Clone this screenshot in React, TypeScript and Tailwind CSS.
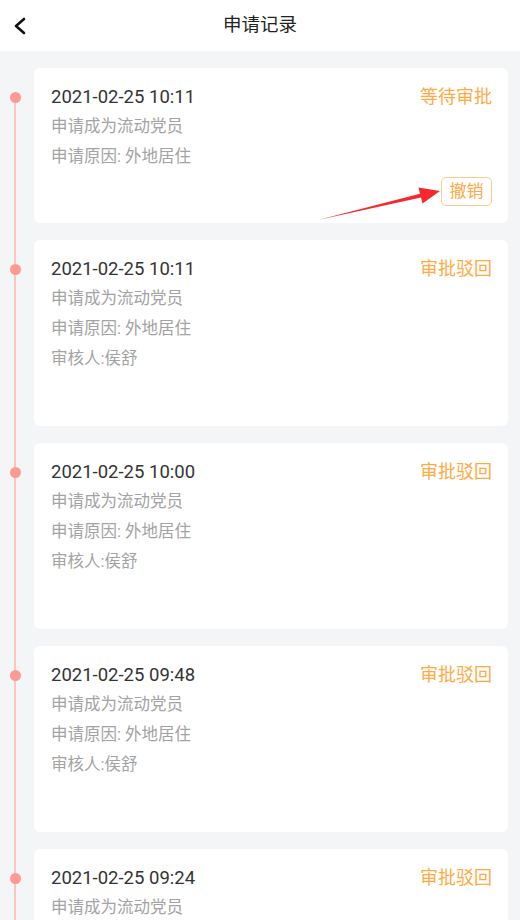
type Record = {
  time: string;
  status: string;
  reviewer?: string;
  canCancel?: boolean;
};

const records: Record[] = [
  { time: '2021-02-25 10:11', status: '等待审批', canCancel: true },
  { time: '2021-02-25 10:11', status: '审批驳回', reviewer: '侯舒' },
  { time: '2021-02-25 10:00', status: '审批驳回', reviewer: '侯舒' },
  { time: '2021-02-25 09:48', status: '审批驳回', reviewer: '侯舒' },
  { time: '2021-02-25 09:24', status: '审批驳回', reviewer: '侯舒' },
];

const font = { fontFamily: 'Roboto, "Noto Sans CJK SC", sans-serif' };

const RecordRow = ({ item, first }: { item: Record; first: boolean }) => (
  <div className="flex pb-[17px] pr-3">
    <div className="relative w-[34px] shrink-0">
      <div
        className={
          first
            ? 'absolute left-[14px] top-[29px] bottom-0 w-[2px] bg-[#fcc6c0]'
            : 'absolute left-[14px] top-[-17px] bottom-0 w-[2px] bg-[#fcc6c0]'
        }
      />
      <div className="absolute left-[9.5px] top-[23.5px] h-[11px] w-[11px] rounded-full bg-[#fd9a94]" />
    </div>

    <div
      className={
        item.canCancel
          ? 'relative flex-1 rounded-md bg-white pl-[17px] pr-4 pt-[14px] pb-[17px]'
          : 'relative flex-1 rounded-md bg-white pl-[17px] pr-4 pt-[14px] h-[186px]'
      }
    >
      <div className="flex items-center justify-between leading-[30px]">
        <span className="text-[18.5px] text-[#333]">{item.time}</span>
        <span className="text-[18px] text-[#ffaa45]">{item.status}</span>
      </div>
      <p className="text-[16.5px] leading-[30px] text-[#a3a3a3]">申请成为流动党员</p>
      <p className="text-[16.5px] leading-[30px] text-[#a3a3a3]">申请原因: 外地居住</p>
      {item.reviewer && (
        <p className="text-[16.5px] leading-[30px] text-[#a3a3a3]">审核人:{item.reviewer}</p>
      )}
      {item.canCancel && (
        <div className="mt-[5px] flex justify-end">
          <button className="flex h-[29px] w-[51px] items-center justify-center rounded-[5px] border-[1.5px] border-[#ffcb8c] text-[17px] text-[#ffaa45]">
            撤销
          </button>
        </div>
      )}
    </div>
  </div>
);

export default function App() {
  return (
    <div className="relative h-[920px] w-[520px] overflow-hidden bg-[#f4f5f7]" style={font}>
      <header className="grid h-[51px] grid-cols-[60px_1fr_60px] items-center bg-white">
        <button className="flex items-center pl-[13px]">
          <svg width="14" height="18" viewBox="0 0 14 18" fill="none">
            <polyline
              points="11,2 3,9 11,16"
              stroke="#111"
              strokeWidth="2.6"
              strokeLinecap="round"
              strokeLinejoin="round"
            />
          </svg>
        </button>
        <h1 className="text-center text-[18.5px] text-[#222]">申请记录</h1>
        <div />
      </header>

      <div className="pt-[17px]">
        {records.map((item, i) => (
          <RecordRow key={i} item={item} first={i === 0} />
        ))}
      </div>

      {/* annotation arrow pointing at the cancel button */}
      <svg className="pointer-events-none absolute left-0 top-0" width="520" height="920">
        <polygon
          points="318,220 420,193.7 418.5,187.5 440,191 422.5,203.5 421,197.5"
          fill="#f5282c"
        />
      </svg>
    </div>
  );
}
